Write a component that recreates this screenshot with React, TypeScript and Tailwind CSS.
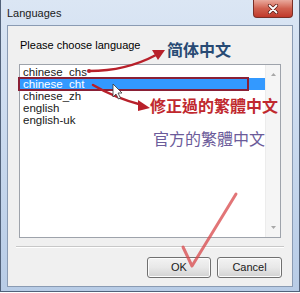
const items = ["chinese_chs", "chinese_cht", "chinese_zh", "english", "english-uk"];

// Win7-style "Languages" dialog with the red hand-drawn annotations on top.
export default function App() {
  return (
    <div className="relative h-[293px] w-[300px] overflow-hidden bg-white font-[family-name:'Liberation_Sans',sans-serif] text-black">
      <div className="flex h-[292px] flex-col border-x border-b border-[#52627a] bg-gradient-to-b from-[#dbe6f4] via-[#c9d9ee] to-[#b8cce6]">
        {/* Title bar */}
        <div className="flex h-[25px] shrink-0 items-start justify-between pl-[6px] pr-[6px]">
          <span className="mt-[6px] text-[11px] leading-[14px] text-[#1a1a1a]">Languages</span>
          <CloseButton />
        </div>

        {/* Client area */}
        <div className="mx-[6px] mb-[4px] flex flex-1 flex-col border border-[#8a9bb3] bg-[#f0f0f0]">
          <div className="mt-[12px] pl-[12px] text-[11px] leading-[14px]">Please choose language</div>

          <div className="mx-[11px] mt-[12px] flex h-[174px] border border-[#9ea3ab] bg-white">
            <ul className="flex-1 pt-[1px]">
              {items.map((it) => (
                <li
                  key={it}
                  className={`h-[12px] pl-[3px] text-[11.5px] leading-[12px] ${
                    it === "chinese_cht" ? "bg-[#3399ff] text-white" : "text-[#202020]"
                  }`}
                >
                  {it}
                </li>
              ))}
            </ul>
            <div className="flex w-[15px] flex-col justify-between border-l border-[#ececec] bg-[#f5f5f5] py-[6px]">
              <svg width="15" height="6" viewBox="0 0 15 6">
                <path d="M5 5 L7.5 2 L10 5 Z" fill="#a8a8a8" />
              </svg>
              <svg width="15" height="6" viewBox="0 0 15 6">
                <path d="M5 1 L7.5 4 L10 1 Z" fill="#a8a8a8" />
              </svg>
            </div>
          </div>

          <div className="mx-[8px] mt-[8px] border-t border-b border-t-[#c8c8c8] border-b-white" />

          <div className="mt-[9px] flex justify-end gap-[6px] pr-[10px]">
            <Win7Button label="OK" w="w-[64px]" />
            <Win7Button label="Cancel" w="w-[65px]" />
          </div>
        </div>
      </div>

      {/* Annotations */}
      <div className="absolute left-[167px] top-[41px] font-[family-name:'Noto_Sans_CJK_SC',sans-serif] text-[16px] font-bold leading-[16px] text-[#274a74]">
        简体中文
      </div>
      <div className="absolute left-[150px] top-[97px] font-[family-name:'Noto_Sans_CJK_TC',sans-serif] text-[16px] font-bold leading-[16px] text-[#c0282e]">
        修正過的繁體中文
      </div>
      <div className="absolute left-[153px] top-[130px] font-[family-name:'Noto_Sans_CJK_TC',sans-serif] text-[16px] leading-[16px] text-[#6b5b9a]">
        官方的繁體中文
      </div>

      <svg className="pointer-events-none absolute left-0 top-0" width="300" height="293" viewBox="0 0 300 293">
        {/* red outline round the selected row */}
        <rect x="19" y="78" width="229" height="12" fill="none" stroke="#8a2036" strokeWidth="2" />
        {/* arrow to 简体中文 */}
        <path d="M89 71 Q126 71 156 55" fill="none" stroke="#b8202a" strokeWidth="2.5" strokeLinecap="round" />
        <circle cx="89" cy="71" r="2" fill="#b8202a" />
        <path d="M165 50 L152 50 L158 60 Z" fill="#b8202a" />
        {/* arrow to 修正過的繁體中文 */}
        <path d="M93 85 Q115 98 142 105" fill="none" stroke="#b8202a" strokeWidth="2.5" strokeLinecap="round" />
        <path d="M150 108 L138 100 L138 111 Z" fill="#b8202a" />
        {/* mouse pointer */}
        <path
          d="M113 84 L113 97 L116 94 L118.5 99 L120.5 98 L118 93 L122 93 Z"
          fill="#ffffff"
          stroke="#333"
          strokeWidth="0.8"
          strokeLinejoin="round"
        />
        {/* check mark */}
        <polyline
          points="183,247 192,266 236,194"
          fill="none"
          stroke="#d8474a"
          strokeOpacity="0.75"
          strokeWidth="3"
          strokeLinecap="round"
          strokeLinejoin="round"
        />
      </svg>
    </div>
  );
}

function Win7Button({ label, w }: { label: string; w: string }) {
  return (
    <div
      className={`${w} flex h-[21px] items-center justify-center rounded-[3px] border border-[#707070] bg-gradient-to-b from-[#f3f3f3] via-[#e8e8e8] to-[#d2d2d2] text-[11px] leading-none text-[#1a1a1a] shadow-[inset_0_0_0_1px_#fcfcfc]`}
    >
      {label}
    </div>
  );
}

function CloseButton() {
  return (
    <div className="flex h-[18px] w-[40px] items-center justify-center rounded-b-[4px] border border-t-0 border-[#7a2e26] bg-gradient-to-b from-[#e9a99d] via-[#d0604f] to-[#c0382a]">
      <svg width="12" height="10" viewBox="0 0 12 10">
        <path d="M2.5 1.5 L9.5 8.5 M9.5 1.5 L2.5 8.5" stroke="#5a1a14" strokeWidth="3.2" strokeLinecap="round" />
        <path d="M2.5 1.5 L9.5 8.5 M9.5 1.5 L2.5 8.5" stroke="#ffffff" strokeWidth="1.8" strokeLinecap="round" />
      </svg>
    </div>
  );
}
